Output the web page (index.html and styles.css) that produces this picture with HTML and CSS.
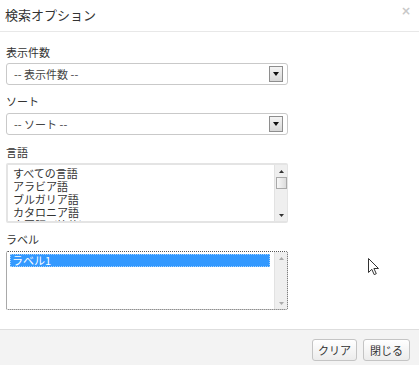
FILE: index.html
```html
<!DOCTYPE html>
<html lang="ja">
<head>
<meta charset="utf-8">
<link rel="stylesheet" href="styles.css">
</head>
<body>
<div class="dialog">
  <div class="header">
    <div class="title">検索オプション</div>
    <div class="close">×</div>
  </div>
  <div class="content">
    <div class="label l1">表示件数</div>
    <div class="select">
      <span class="sel-text">-- 表示件数 --</span>
      <span class="drop"><svg width="6" height="4" viewBox="0 0 6 4"><path d="M0 0H6L3 4Z" fill="#111"/></svg></span>
    </div>
    <div class="label l2">ソート</div>
    <div class="select">
      <span class="sel-text">-- ソート --</span>
      <span class="drop"><svg width="6" height="4" viewBox="0 0 6 4"><path d="M0 0H6L3 4Z" fill="#111"/></svg></span>
    </div>
    <div class="label l3">言語</div>
    <div class="listbox lang">
      <div class="options">
        <div class="opt">すべての言語</div>
        <div class="opt">アラビア語</div>
        <div class="opt">ブルガリア語</div>
        <div class="opt">カタロニア語</div>
        <div class="opt">中国語（簡体）</div>
      </div>
      <div class="scrollbar">
        <div class="arrow up"><svg width="5" height="3" viewBox="0 0 5 3"><path d="M0 3H5L2.5 0Z" fill="#333"/></svg></div>
        <div class="thumb"></div>
        <div class="track"></div>
        <div class="arrow down"><svg width="5" height="3" viewBox="0 0 5 3"><path d="M0 0H5L2.5 3Z" fill="#333"/></svg></div>
      </div>
    </div>
    <div class="label l4">ラベル</div>
    <div class="listbox labels">
      <div class="options">
        <div class="opt selected">ラベル1</div>
      </div>
      <div class="scrollbar light">
        <div class="arrow up"><svg width="5" height="3" viewBox="0 0 5 3"><path d="M0 3H5L2.5 0Z" fill="#aaa"/></svg></div>
        <div class="track"></div>
        <div class="arrow down"><svg width="5" height="3" viewBox="0 0 5 3"><path d="M0 0H5L2.5 3Z" fill="#aaa"/></svg></div>
      </div>
    </div>
  </div>
  <div class="footer">
    <button class="btn b-clear">クリア</button>
    <button class="btn b-close">閉じる</button>
  </div>
  <svg class="cursor" width="12" height="18" viewBox="0 0 12 18"><path d="M0.5 0.5V14.5L3.8 11.3L6.2 16.6L8.3 15.7L5.9 10.5H10.5Z" fill="#fff" stroke="#333" stroke-width="1"/></svg>
</div>
</body>
</html>
```
FILE: styles.css
```css
html, body {
  margin: 0;
  padding: 0;
  background: #fff;
}
body {
  font-family: "Noto Sans CJK JP", "Noto Sans", sans-serif;
  color: #333;
  font-size: 12px;
  width: 419px;
  height: 365px;
  overflow: hidden;
}
.dialog {
  position: relative;
  width: 419px;
  height: 365px;
  display: flex;
  flex-direction: column;
}
.header {
  height: 31px;
  border-bottom: 1px solid #e8e8e8;
  display: flex;
  align-items: center;
  justify-content: space-between;
  padding: 0 8px 0 5px;
  flex-shrink: 0;
}
.title {
  font-size: 13px;
  color: #333;
  line-height: 18px;
  margin-top: -2px;
}
.close {
  font-family: "DejaVu Sans", sans-serif;
  font-size: 12px;
  font-weight: bold;
  color: #c8c8c8;
  margin-top: -9px;
}
.content {
  flex: 1;
  padding: 0 6px;
  display: flex;
  flex-direction: column;
  align-items: flex-start;
}
.label {
  font-size: 11px;
  line-height: 16px;
  color: #333;
}
.l1 { margin-top: 12px; margin-bottom: 3px; }
.l2 { margin-top: 8px; margin-bottom: 4px; }
.l3 { margin-top: 9px; margin-bottom: 3px; }
.l4 { margin-top: 8px; margin-bottom: 4px; }
.select {
  box-sizing: border-box;
  width: 282px;
  height: 22px;
  border: 1px solid #c9c9c9;
  border-radius: 3px;
  display: flex;
  align-items: center;
  justify-content: space-between;
  padding: 0 4px 0 7px;
}
.sel-text {
  font-size: 11px;
  color: #444;
}
.drop {
  box-sizing: border-box;
  width: 14px;
  height: 16px;
  border: 1px solid #8e8e8e;
  background: linear-gradient(#f4f4f4, #d8d8d8);
  display: flex;
  align-items: center;
  justify-content: center;
}
.listbox {
  box-sizing: border-box;
  width: 282px;
  display: flex;
  border: 1px solid #dcdcdc;
  border-radius: 2px;
  overflow: hidden;
}
.lang {
  height: 60px;
  border-width: 2px 1px 2px 2px;
  border-color: #e4e4e4;
}
.labels {
  height: 59px;
  border: 1px dotted #555;
}
.options {
  flex: 1;
  padding: 2px 0 0 5px;
  overflow: hidden;
}
.labels .options {
  padding: 2px 4px 0 3px;
}
.opt {
  font-size: 11px;
  line-height: 13px;
  color: #333;
  white-space: nowrap;
}
.opt.selected {
  background: #3399ff;
  color: #fff;
  outline: 1px dotted #9cd0ff;
  outline-offset: -1px;
  padding-left: 2px;
}
.scrollbar {
  width: 12px;
  background: #efefef;
  border-left: 1px solid #e2e2e2;
  display: flex;
  flex-direction: column;
  align-items: center;
}
.arrow {
  height: 12px;
  display: flex;
  align-items: center;
  justify-content: center;
}
.thumb {
  box-sizing: border-box;
  width: 11px;
  height: 12px;
  border: 1px solid #a9a9a9;
  background: linear-gradient(90deg, #f8f8f8, #dcdcdc);
}
.track { flex: 1; }
.footer {
  flex-shrink: 0;
  height: 36px;
  border-top: 1px solid #dedede;
  background: #f3f3f3;
  margin-top: 19px;
  display: flex;
  justify-content: flex-end;
  align-items: flex-start;
  gap: 6px;
  padding: 9px 9px 0 0;
}
.btn {
  font-family: "Noto Sans CJK JP", sans-serif;
  font-size: 11px;
  color: #333;
  height: 22px;
  padding: 0;
  border: 1px solid #c4c4c4;
  border-radius: 3px;
  background: linear-gradient(#ffffff, #ececec);
  line-height: 18px;
}
.b-clear { width: 45px; }
.b-close { width: 47px; }
.cursor {
  position: absolute;
  left: 368px;
  top: 258px;
}
```
